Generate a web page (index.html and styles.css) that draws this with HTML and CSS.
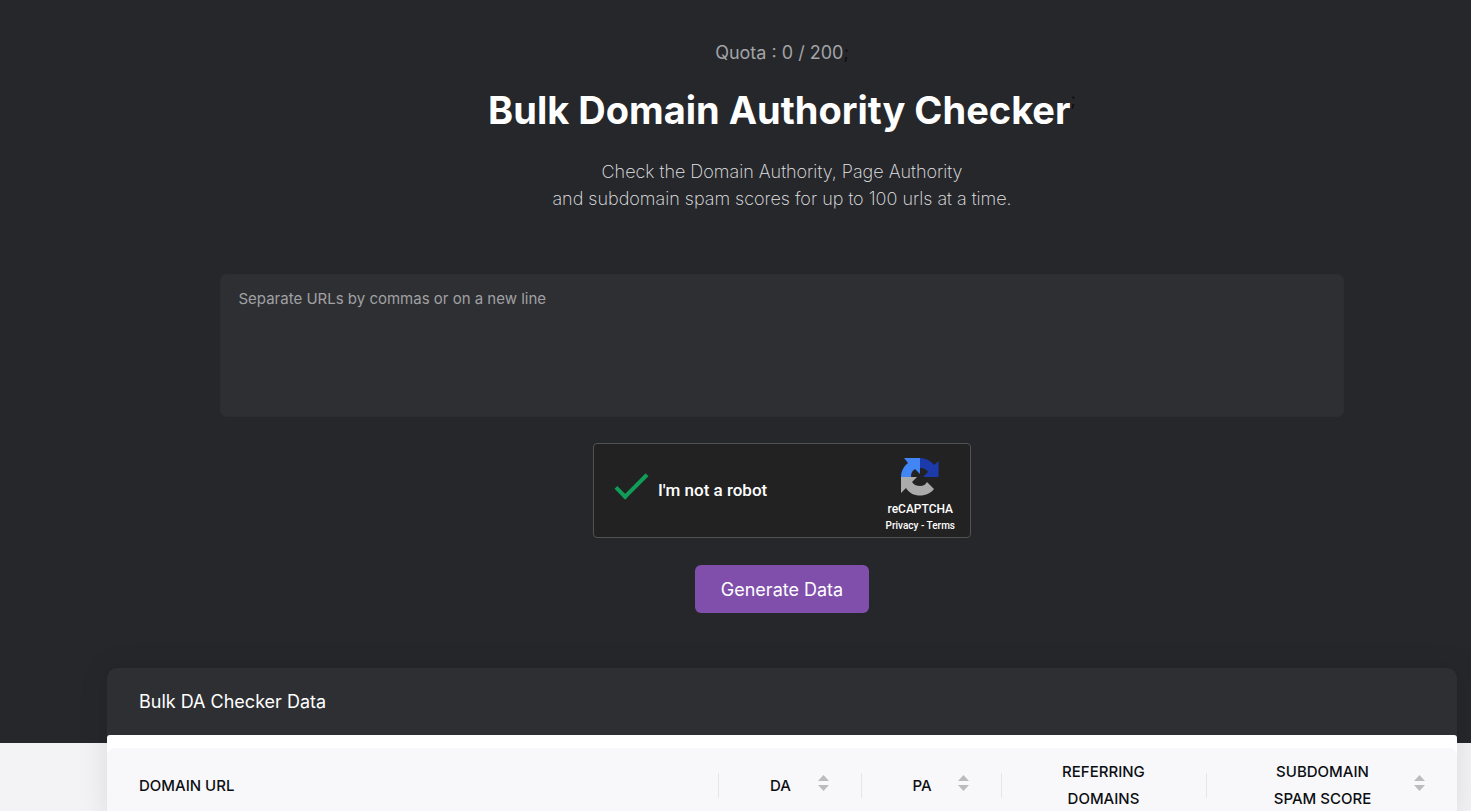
FILE: index.html
```html
<!DOCTYPE html>
<html lang="en">
<head>
    <meta charset="UTF-8">
    <meta name="viewport" content="width=device-width, initial-scale=1.0">
    <title>Bulk Domain Authority Checker</title>
    <link rel="stylesheet" href="styles.css">
</head>
<body>
    <main>
        <section class="hero">
            <div class="quota"><span>Quota : 0 / 200</span>;</div>
            <div class="title"><h1>Bulk Domain Authority Checker</h1>;</div>
            <p class="intro">Check the Domain Authority, Page Authority<br>and subdomain spam scores for up to 100 urls at a time.</p>

            <form class="checker">
                <textarea class="urls" aria-label="URLs" placeholder="Separate URLs by commas or on a new line"></textarea>

                <div class="captcha">
                    <label class="robot">
                        <input type="checkbox" checked>
                        I'm not a robot
                    </label>
                    <div class="brand">
                        <svg class="logo" width="38" height="38" viewBox="0 0 38 38" aria-hidden="true">
                            <path fill="#1c3aa9" d="M19 0C25 0 30 3 33 7L37.500 3V19H22L27 14C25 11 23 10 19 10Z"/>
                            <path fill="#4285f4" d="M19 0V16L14 11C11 13 10 15 10 19H0C0 13 3 8 7 5L3 0Z"/>
                            <path fill="#ababab" d="M0 19H16L11 24C13 27 16 28 19 28C22 28 24 27 26 24L33 31C30 35 25 37.500 19 37.500C13 37.500 8 35 5 30L0 35Z"/>
                        </svg>
                        <div class="brand-name">reCAPTCHA</div>
                        <div class="brand-links"><a href="#">Privacy</a> - <a href="#">Terms</a></div>
                    </div>
                </div>

                <button type="submit" class="generate">Generate Data</button>
            </form>
        </section>

        <section class="results">
            <h2>Bulk DA Checker Data</h2>
            <div class="table-wrap">
                <table>
                    <thead>
                        <tr>
                            <th class="col-url">Domain URL</th>
                            <th class="col-da sortable">DA</th>
                            <th class="col-pa sortable">PA</th>
                            <th class="col-ref">Referring<br>Domains</th>
                            <th class="col-spam sortable">Subdomain<br>Spam Score</th>
                        </tr>
                    </thead>
                </table>
            </div>
        </section>
    </main>
</body>
</html>
```

FILE: styles.css
```css
* {
    box-sizing: border-box;
}
body {
    margin: 0;
    font-family: Inter, "Liberation Sans", sans-serif;
    font-size: 18px;
    line-height: 27px;
    color: #0c0e12;
    background-color: #f3f3f5;
}
.hero {
    display: flex;
    flex-direction: column;
    align-items: center;
    padding: 39px 14px 130px 107px;
    background-color: #25272b;
    text-align: center;
}
.quota span {
    color: #a3a4a6;
}
.title {
    display: flex;
    margin-top: 20px;
}
h1 {
    margin: 0;
    font-size: 38px;
    font-weight: 700;
    line-height: 48px;
    color: #fff;
}
.intro {
    margin: 24px 0 0;
    font-weight: 200;
    color: #e6e6e7;
}
.checker {
    display: flex;
    flex-direction: column;
    align-items: center;
    width: 100%;
    margin-top: 62px;
}
.urls {
    display: block;
    width: 83.333%;
    height: 143px;
    padding: 12px 18px;
    border: 1px solid #2b2d31;
    border-radius: 6px;
    background-color: #2e2f33;
    font-family: inherit;
    font-size: 15px;
    line-height: 24px;
    color: #fff;
    resize: none;
}
.urls::placeholder {
    color: #a0a1a3;
}
.captcha {
    display: flex;
    justify-content: space-between;
    width: 378px;
    height: 95px;
    margin-top: 26px;
    padding: 0 15px 0 21px;
    border: 1px solid #525252;
    border-radius: 4px;
    background-color: #222;
    font-family: Roboto, "Liberation Sans", sans-serif;
    font-weight: 500;
    color: #fff;
}
.robot {
    display: flex;
    align-items: center;
    gap: 8px;
    font-size: 17px;
}
.robot input {
    appearance: none;
    width: 35px;
    height: 36px;
    margin: 0;
}
/* tick mark */
.robot input:checked::before {
    content: "";
    display: block;
    width: 11px;
    height: 29px;
    margin: -7px 0 0 9px;
    border: solid #0f9d58;
    border-width: 0 4px 4px 0;
    transform: rotate(45deg);
}
.brand {
    padding-top: 14px;
    text-align: center;
}
.logo {
    display: block;
    margin: 0 auto;
}
.brand-name {
    margin-top: 4px;
    font-size: 12px;
    line-height: 18px;
}
.brand-links {
    font-size: 10px;
    line-height: 16px;
}
.brand-links a {
    color: inherit;
    text-decoration: none;
}
.generate {
    height: 48px;
    margin-top: 27px;
    padding: 0 26px;
    border: none;
    border-radius: 6px;
    background-color: #7f4fab;
    font-family: inherit;
    font-size: 18px;
    color: #fff;
    cursor: pointer;
}
.results {
    margin: -75px 14px 0 107px;
    border-radius: 10px;
    background-color: #2e2f33;
    box-shadow: 0 0 30px rgba(0, 0, 0, 0.1);
}
h2 {
    margin: 0;
    padding: 20px 32px;
    font-size: 18px;
    font-weight: 400;
    color: #fff;
}
.table-wrap {
    padding-top: 13px;
    border-radius: 3px;
    background-color: #fff;
}
table {
    width: 100%;
    table-layout: fixed;
    border-spacing: 0;
    border-radius: 8px;
    background-color: #f8f8fb;
}
th {
    position: relative;
    padding: 10px 0;
    font-size: 15px;
    font-weight: 500;
    text-transform: uppercase;
}
th + th::before {
    content: "";
    position: absolute;
    left: 0;
    top: calc(50% - 12px);
    width: 1px;
    height: 25px;
    background-color: #e6e6e9;
}
.col-url {
    width: 45.259%;
    padding-left: 32px;
    text-align: left;
}
.col-da {
    width: 10.593%;
}
.col-pa {
    width: 10.370%;
}
.col-ref {
    width: 15.185%;
}
.sortable {
    padding-right: 18px;
}
.sortable::after {
    content: "";
    position: absolute;
    right: 32px;
    top: calc(50% - 10px);
    width: 11px;
    height: 16px;
    background-color: #bcbcbe;
    clip-path: polygon(50% 0, 100% 6px, 0 6px, 0 10px, 100% 10px, 50% 100%, 0 10px, 0 6px);
}
```
